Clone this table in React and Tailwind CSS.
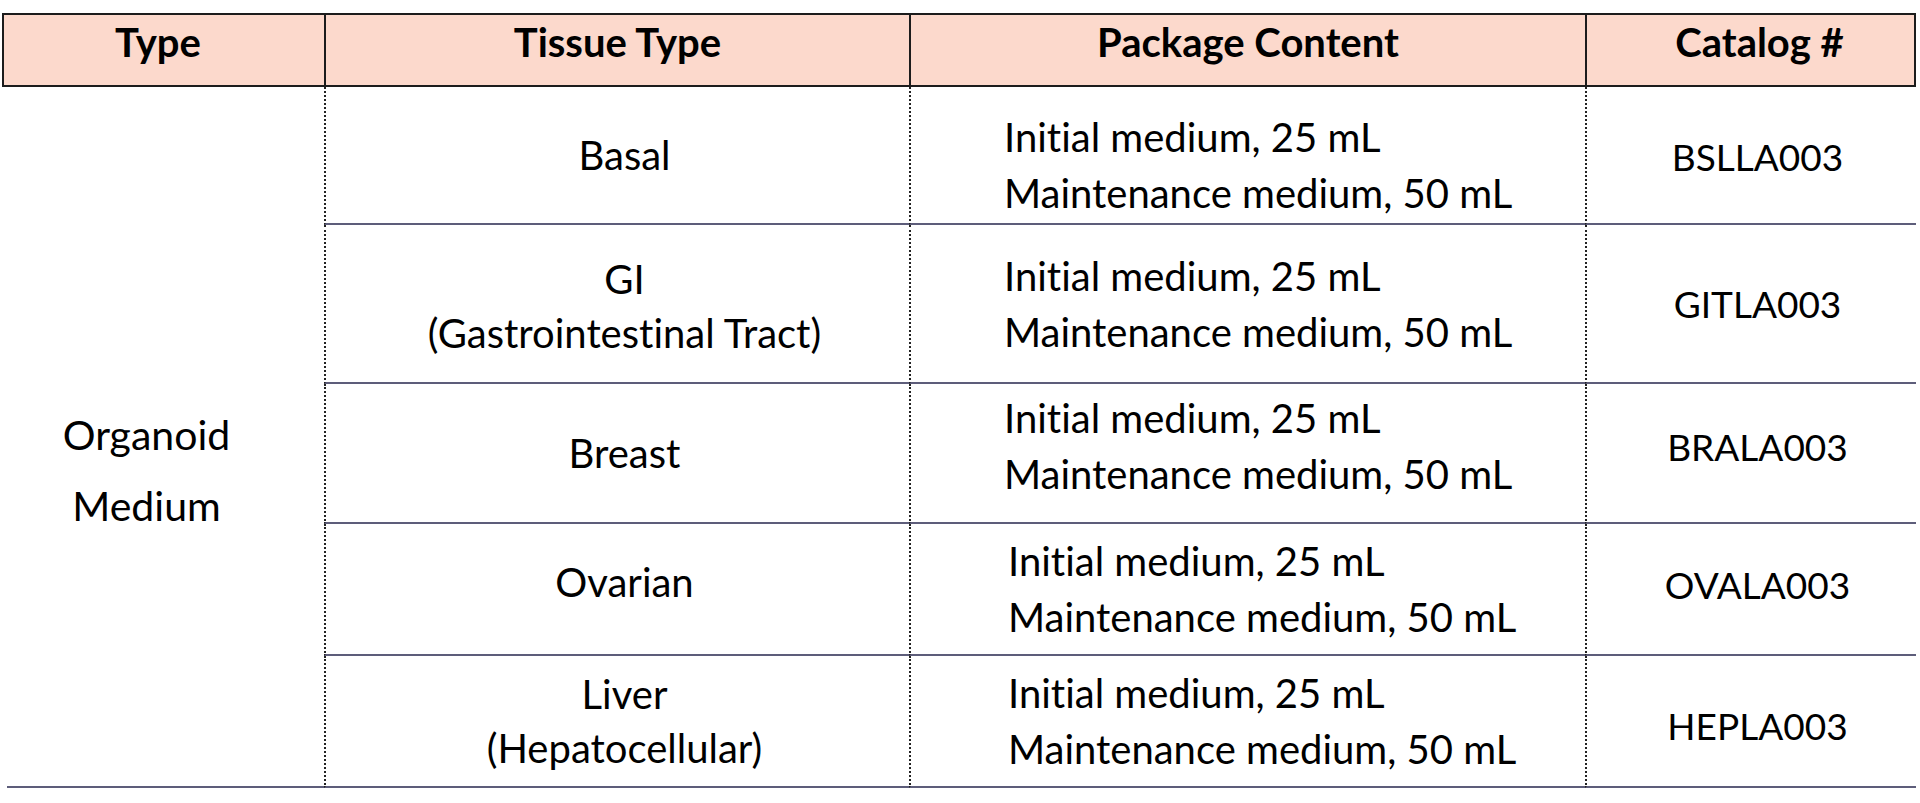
const rows = [
  { tissue: ['Basal'], cat: 'BSLLA003', tPad: '', pPad: 'pt-[20px] pl-[93px]', cPad: 'pt-[4px]' },
  { tissue: ['GI', '(Gastrointestinal Tract)'], cat: 'GITLA003', tPad: 'pt-[4px]', pPad: 'pl-[93px]', cPad: '' },
  { tissue: ['Breast'], cat: 'BRALA003', tPad: '', pPad: 'pb-[14px] pl-[93px]', cPad: 'pb-[12px]' },
  { tissue: ['Ovarian'], cat: 'OVALA003', tPad: 'pb-[14px]', pPad: 'pl-[97px]', cPad: 'pb-[8px]' },
  { tissue: ['Liver', '(Hepatocellular)'], cat: 'HEPLA003', tPad: '', pPad: 'pl-[97px]', cPad: 'pt-[10px]' },
]

const headers = [
  { label: 'Type', pad: 'pr-[12px]' },
  { label: 'Tissue Type', pad: '' },
  { label: 'Package Content', pad: '' },
  { label: 'Catalog #', pad: 'pl-[18px] border-r-2' },
]

// body cell: dotted rule on the left, solid grey rule underneath
const cell = 'border-b-2 border-b-[#5d5d7a] [border-left:2px_dotted_#222]'

export default function App() {
  return (
    <div className="min-h-[803px] bg-white pt-[13px] pl-[2px] font-['Lato',sans-serif] text-[40px] text-black [font-variant-ligatures:none]">
      <div className="grid grid-cols-[322px_585px_676px_331px] grid-rows-[74px_138px_159px_140px_132px_132px]">
        {headers.map(h => (
          <div
            key={h.label}
            className={'flex items-center justify-center pb-[16px] bg-[#fcd9cc] border-y-2 border-l-2 border-[#1c1c1c] font-bold ' + h.pad}
          >
            {h.label}
          </div>
        ))}

        {/* Type column, spans all body rows */}
        <div className="row-span-5 ml-[5px] flex flex-col items-center justify-center pt-[66px] pr-[38px] leading-[71px] text-[41px] border-b-2 border-b-[#5d5d7a]">
          <span>Organoid</span>
          <span>Medium</span>
        </div>

        {rows.map(r => (
          <div key={r.cat} className="contents">
            <div className={cell + ' flex flex-col items-center justify-center leading-[54px] pl-[14px] ' + r.tPad}>
              {r.tissue.map(t => <span key={t}>{t}</span>)}
            </div>
            <div className={cell + ' flex flex-col justify-center leading-[56px] ' + r.pPad}>
              <span>Initial medium, 25 mL</span>
              <span>Maintenance medium, 50 mL</span>
            </div>
            <div className={cell + ' flex items-center justify-center pl-[12px] text-[37px] ' + r.cPad}>
              {r.cat}
            </div>
          </div>
        ))}
      </div>
    </div>
  )
}
